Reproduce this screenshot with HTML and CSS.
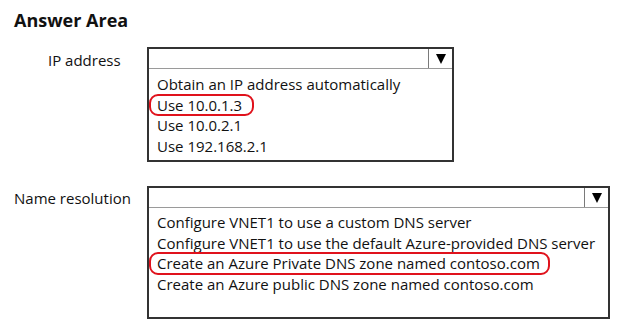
FILE: index.html
```html
<!DOCTYPE html>
<html>
<head>
<meta charset="utf-8">
<link rel="stylesheet" href="styles.css">
</head>
<body>
<h1 class="title">Answer Area</h1>
<div class="area">
  <div class="question q-ip">
    <div class="label">IP address</div>
    <div class="box box-ip">
      <div class="header"><div class="field"></div><div class="arrow"><span class="tri"></span></div></div>
      <ul class="options">
        <li>Obtain an IP address automatically</li>
        <li><span class="marked mark-ip">Use 10.0.1.3</span></li>
        <li>Use 10.0.2.1</li>
        <li>Use 192.168.2.1</li>
      </ul>
    </div>
  </div>
  <div class="question q-dns">
    <div class="label">Name resolution</div>
    <div class="box box-dns">
      <div class="header"><div class="field"></div><div class="arrow"><span class="tri"></span></div></div>
      <ul class="options">
        <li>Configure VNET1 to use a custom DNS server</li>
        <li>Configure VNET1 to use the default Azure-provided DNS server</li>
        <li><span class="marked mark-dns">Create an Azure Private DNS zone named contoso.com</span></li>
        <li>Create an Azure public DNS zone named contoso.com</li>
      </ul>
    </div>
  </div>
</div>
</body>
</html>
```
FILE: styles.css
```css
html, body {
  margin: 0;
  padding: 0;
  background: #fff;
}
body {
  font-family: "Open Sans", "Noto Sans", sans-serif;
  color: #111;
  width: 624px;
  height: 336px;
  overflow: hidden;
}
.title {
  margin: 0;
  padding: 8px 0 0 14px;
  font-size: 18px;
  line-height: 24px;
  font-weight: 700;
  color: #111;
}
.area {
  display: flex;
  flex-direction: column;
  gap: 24px;
  padding-top: 15px;
}
.question {
  display: flex;
  align-items: flex-start;
}
.label {
  width: 147px;
  box-sizing: border-box;
  font-size: 15px;
  line-height: 22px;
  padding-top: 2px;
}
.q-ip .label { padding-left: 48px; }
.q-dns .label { padding-left: 14px; padding-top: 1px; }
.box {
  border: 2px solid #333;
  box-sizing: border-box;
}
.box-ip { width: 307px; height: 115px; }
.box-dns { width: 463px; height: 133px; }
.header {
  display: flex;
  height: 19px;
  border-bottom: 1px solid #9a9a9a;
}
.field { flex: 1; }
.arrow {
  width: 23px;
  border-left: 1px solid #7a7a7a;
  display: flex;
  align-items: center;
  justify-content: center;
}
.tri {
  width: 0;
  height: 0;
  border-left: 5.5px solid transparent;
  border-right: 5.5px solid transparent;
  border-top: 10px solid #000;
}
.options {
  list-style: none;
  margin: 0;
  padding: 5px 0 0 8px;
  font-size: 15px;
  line-height: 20.7px;
}
.q-dns .options { padding-top: 4px; }
.marked {
  position: relative;
  display: inline-block;
}
.marked::after {
  content: "";
  position: absolute;
  top: -1px;
  bottom: -1px;
  left: -8px;
  border: 2px solid #e0121c;
  border-radius: 9px;
}
.mark-ip::after { right: -12px; }
.mark-dns::after { right: -10px; }
```
